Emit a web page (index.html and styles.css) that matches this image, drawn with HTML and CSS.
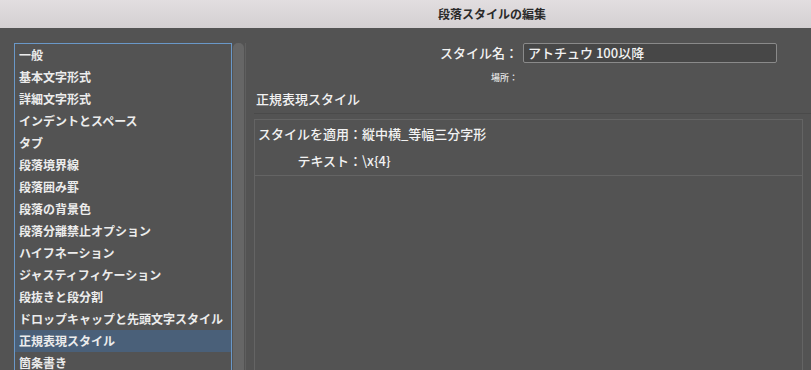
FILE: index.html
```html
<!DOCTYPE html>
<html lang="ja">

<head>
    <meta charset="UTF-8">
    <meta name="viewport" content="width=device-width, initial-scale=1.0">
    <title>段落スタイルの編集</title>
    <link rel="stylesheet" href="styles.css">
</head>

<body>
    <header class="titlebar">段落スタイルの編集</header>

    <div class="main">
        <!-- 左側のカテゴリリスト -->
        <div class="sidebar">
            <ul class="category-list">
                <li>一般</li>
                <li>基本文字形式</li>
                <li>詳細文字形式</li>
                <li>インデントとスペース</li>
                <li>タブ</li>
                <li>段落境界線</li>
                <li>段落囲み罫</li>
                <li>段落の背景色</li>
                <li>段落分離禁止オプション</li>
                <li>ハイフネーション</li>
                <li>ジャスティフィケーション</li>
                <li>段抜きと段分割</li>
                <li>ドロップキャップと先頭文字スタイル</li>
                <li class="active">正規表現スタイル</li>
                <li>箇条書き</li>
            </ul>
            <div class="scrollbar"></div>
        </div>

        <!-- 右側の設定パネル -->
        <section class="panel">
            <div class="name-form">
                <label class="name-label">スタイル名：</label>
                <div class="name-input">アトチュウ 100以降</div>
                <span class="place-label">場所：</span>
                <span></span>
            </div>

            <h2 class="section-title">正規表現スタイル</h2>

            <div class="rule-box">
                <div class="rule-rows">
                    <span class="rule-label">スタイルを適用：</span>
                    <span>縦中横_等幅三分字形</span>
                    <span class="rule-label">テキスト：</span>
                    <span>\x{4}</span>
                </div>
            </div>
        </section>
    </div>
</body>

</html>
```

FILE: styles.css
```css
/* 全体 */

body {
    margin: 0;
    width: 811px;
    height: 370px;
    overflow: hidden;
    background-color: #535353;
    color: #f2f2f2;
    font-family: "Noto Sans CJK JP", "Noto Sans", sans-serif;
}

/* タイトルバー */

.titlebar {
    height: 28px;
    line-height: 28px;
    padding-left: 438px;
    background: linear-gradient(#e2dee0, #d4d0d2);
    color: #2a2a2a;
    font-size: 12px;
    font-weight: 700;
}

.main {
    display: flex;
    padding-top: 15px;
}

/* カテゴリリスト */

.sidebar {
    display: flex;
    margin-left: 14px;
}

.category-list {
    list-style: none;
    margin: 0;
    padding: 0;
    width: 216px;
    height: 340px;
    border: 1px solid #6a98c8;
    background-color: #535353;
}

.category-list li {
    height: 22px;
    line-height: 22px;
    padding-left: 4px;
    font-size: 12px;
    font-weight: 700;
    color: #ececec;
    white-space: nowrap;
}

.category-list li.active {
    background-color: #4a6079;
}

.scrollbar {
    width: 11px;
    height: 340px;
    margin-left: 1px;
    background-color: #666666;
    border-radius: 5px 5px 0 0;
}

/* 右パネル */

.panel {
    flex: 1;
    height: 340px;
    margin-left: 1px;
    border-left: 1px solid #5f5f5f;
    padding-left: 8px;
    font-weight: 500;
}

.name-form {
    display: grid;
    grid-template-columns: max-content 254px;
    column-gap: 5px;
    justify-content: end;
    padding-right: 34px;
}

.name-label {
    font-size: 13px;
    line-height: 20px;
    text-align: right;
}

.name-input {
    box-sizing: border-box;
    height: 20px;
    line-height: 18px;
    padding-left: 4px;
    font-size: 13px;
    background-color: #474747;
    border: 1px solid #8a8a8a;
    border-radius: 2px;
}

.place-label {
    margin-top: 8px;
    font-size: 9px;
    line-height: 14px;
    text-align: right;
    color: #e6e6e6;
}

.section-title {
    margin: 5px 0 0;
    padding: 0 0 5px 2px;
    line-height: 18px;
    font-size: 13px;
    font-weight: 500;
    border-bottom: 1px solid #4a4a4a;
}

.rule-box {
    height: 260px;
    margin: 5px 8px 0 0;
    border: 1px solid #646464;
}

.rule-rows {
    display: grid;
    grid-template-columns: max-content 1fr;
    row-gap: 7px;
    padding: 4px 0 4px 3px;
    border-bottom: 1px solid #646464;
    font-size: 13px;
    line-height: 20px;
}

.rule-label {
    text-align: right;
}
```
